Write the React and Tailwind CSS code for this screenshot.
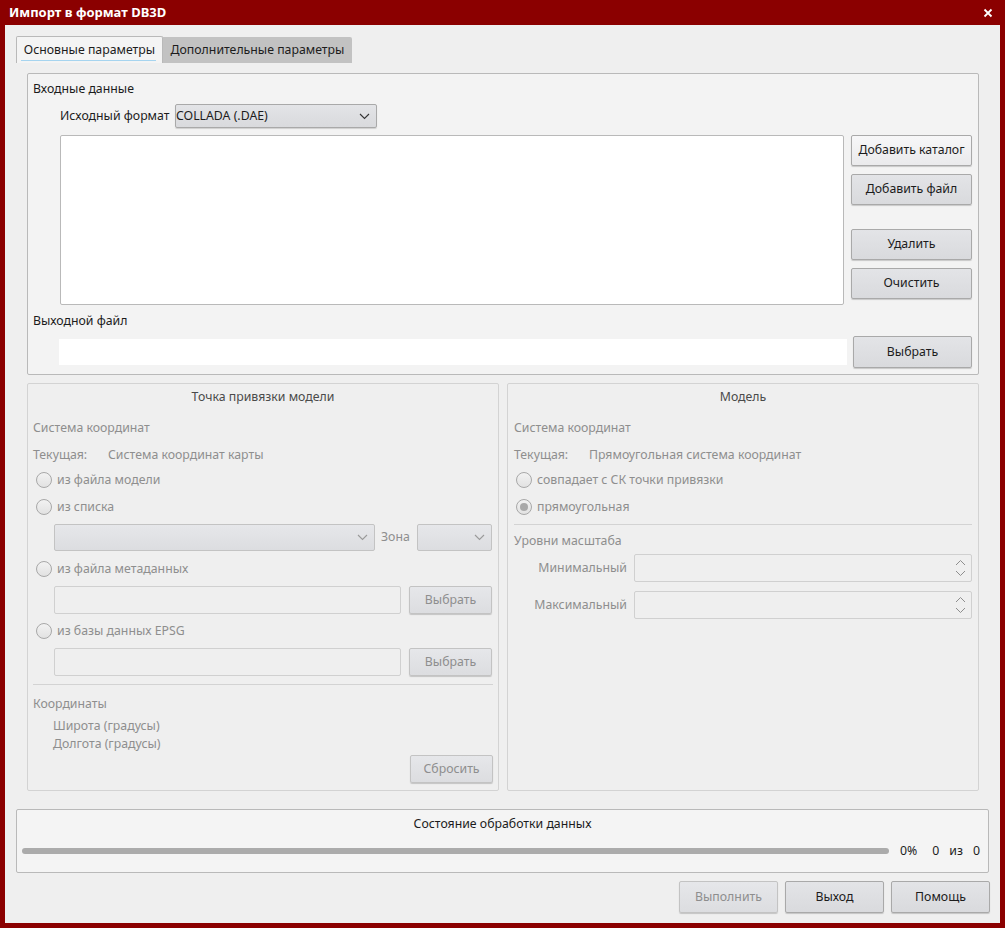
import React from "react";

const F = { fontFamily: '"Noto Sans", "Open Sans", sans-serif' };

function Chevron({ className = "" }) {
  return (
    <svg width="11" height="7" viewBox="0 0 11 7" className={className}>
      <path d="M1 1l4.5 4.5L10 1" fill="none" stroke="currentColor" strokeWidth="1.1" />
    </svg>
  );
}

function Btn({ children, w, h = 30, disabled, light, className = "" }) {
  return (
    <div
      className={`flex items-center justify-center rounded-[2px] border text-[12.3px] shadow-[0_1px_1px_rgba(0,0,0,0.18)] ${
        disabled
          ? "border-[#c3c3c3] bg-gradient-to-b from-[#e6e7ea] to-[#dcdde0] text-[#8e8e8e]"
          : light
          ? "border-[#a9a9a9] bg-gradient-to-b from-[#f7f7f8] to-[#eaeaec] text-[#1c1c1c]"
          : "border-[#a9a9a9] bg-gradient-to-b from-[#e3e4e7] to-[#d9dadd] text-[#1c1c1c]"
      } ${className}`}
      style={{ width: w, height: h }}
    >
      {children}
    </div>
  );
}

function Radio({ checked, label }) {
  return (
    <div className="flex items-center h-[20px] text-[12.3px] text-[#8e8e8e]">
      <div className="ml-[8px] w-[16px] h-[16px] rounded-full border border-[#a8a8a8] bg-gradient-to-b from-[#f2f2f2] to-[#e2e2e2] flex items-center justify-center">
        {checked && <div className="w-[8px] h-[8px] rounded-full bg-[#a9a9a9]" />}
      </div>
      <span className="ml-[5px]">{label}</span>
    </div>
  );
}

function DisInput({ w }) {
  return <div className="h-[28px] rounded-[2px] border border-[#d0d0d0] bg-[#efefef]" style={{ width: w }} />;
}

function Spin() {
  return (
    <div className="relative h-[28px] w-[338px] rounded-[2px] border border-[#d0d0d0] bg-[#efefef]">
      <svg width="11" height="20" viewBox="0 0 11 20" className="absolute right-[5px] top-[3px] text-[#8e8e8e]">
        <path d="M1 7l4.5-4.5L10 7" fill="none" stroke="currentColor" strokeWidth="1" />
        <path d="M1 13l4.5 4.5L10 13" fill="none" stroke="currentColor" strokeWidth="1" />
      </svg>
    </div>
  );
}

export default function App() {
  return (
    <div style={F} className="w-[1005px] h-[928px] bg-[#8b0000] flex flex-col px-[5px] pb-[5px]">
      {/* title bar */}
      <div className="h-[25px] flex items-center justify-between pl-[4px] pr-[7px]">
        <span className="text-white text-[13px] font-bold leading-none">Импорт в формат DB3D</span>
        <svg width="10" height="10" viewBox="0 0 10 10">
          <path d="M1.5 1.5l7 7M8.5 1.5l-7 7" stroke="white" strokeWidth="1.8" />
        </svg>
      </div>

      {/* client */}
      <div className="flex-1 bg-[#efefef] flex flex-col pl-[11px] pr-[11px] pt-[11px] text-[#1c1c1c]">
        {/* tabs */}
        <div className="flex items-end h-[27px]">
          <div className="relative h-[27px] w-[147px] border border-b-0 border-[#b9b9b9] bg-[#f4f4f4] rounded-t-[2px] flex items-center justify-center text-[12.3px]">
            Основные параметры
            <div className="absolute left-[4px] right-[6px] bottom-[2px] h-[1px] bg-[#a6d4ef]" />
          </div>
          <div className="h-[26px] w-[189px] bg-[#c2c2c2] flex items-center justify-center text-[12.3px] rounded-tr-[2px]">
            Дополнительные параметры
          </div>
        </div>

        {/* tab pane */}
        <div className="flex flex-col pl-[11px] pr-[10px] pt-[10px]">
          {/* input group */}
          <div className="h-[302px] border border-[#b9b9b9] rounded-[2px] bg-[#f3f3f3] flex flex-col pl-[5px] pr-[5px]">
            <div className="mt-[6px] h-[18px] leading-[18px] text-[12.3px]">Входные данные</div>
            <div className="mt-[6px] flex items-center h-[24px] ml-[27px]">
              <span className="text-[12.3px] w-[115px]">Исходный формат</span>
              <div className="w-[202px] h-[24px] rounded-[2px] border border-[#a9a9a9] bg-gradient-to-b from-[#e3e4e7] to-[#d9dadd] shadow-[0_1px_1px_rgba(0,0,0,0.15)] flex items-center justify-between pr-[6px] text-[12.3px]">
                <span>COLLADA (.DAE)</span>
                <Chevron className="text-[#333]" />
              </div>
            </div>
            <div className="mt-[7px] flex ml-[27px] h-[170px]">
              <div className="w-[784px] h-[170px] bg-white border border-[#b9b9b9] rounded-[2px]" />
              <div className="ml-[7px] flex flex-col">
                <Btn w={121} h={31} light>Добавить каталог</Btn>
                <Btn w={121} h={31} className="mt-[8px]">Добавить файл</Btn>
                <Btn w={121} h={31} className="mt-[24px]">Удалить</Btn>
                <Btn w={121} h={31} className="mt-[8px]">Очистить</Btn>
              </div>
            </div>
            <div className="mt-[7px] h-[18px] leading-[18px] text-[12.3px]">Выходной файл</div>
            <div className="mt-[6px] flex items-center ml-[26px]">
              <div className="w-[788px] h-[26px] bg-white" />
              <Btn w={119} h={32} className="ml-[6px]">Выбрать</Btn>
            </div>
          </div>

          {/* two groups */}
          <div className="mt-[8px] flex gap-[8px]">
            {/* left */}
            <div className="w-[472px] h-[408px] border border-[#d3d3d3] rounded-[2px] flex flex-col px-[5px] text-[12.3px] text-[#8e8e8e]">
              <div className="mt-[3px] h-[20px] leading-[20px] text-center text-[#4a4a4a]">Точка привязки модели</div>
              <div className="mt-[11px] h-[20px] leading-[20px]">Система координат</div>
              <div className="mt-[7px] h-[20px] leading-[20px] flex">
                <span className="w-[75px]">Текущая:</span>
                <span>Система координат карты</span>
              </div>
              <div className="mt-[5px] -ml-[5px]"><Radio label="из файла модели" /></div>
              <div className="mt-[7px] -ml-[5px]"><Radio label="из списка" /></div>
              <div className="mt-[7px] ml-[21px] flex items-center">
                <div className="w-[321px] h-[27px] rounded-[2px] border border-[#c3c3c3] bg-gradient-to-b from-[#e6e7ea] to-[#dcdde0] flex items-center justify-end pr-[6px]">
                  <Chevron className="text-[#9a9a9a]" />
                </div>
                <span className="ml-[6px] w-[36px]">Зона</span>
                <div className="w-[75px] h-[27px] rounded-[2px] border border-[#c3c3c3] bg-gradient-to-b from-[#e6e7ea] to-[#dcdde0] flex items-center justify-end pr-[6px]">
                  <Chevron className="text-[#9a9a9a]" />
                </div>
              </div>
              <div className="mt-[8px] -ml-[5px]"><Radio label="из файла метаданных" /></div>
              <div className="mt-[7px] ml-[21px] flex items-center">
                <DisInput w={347} />
                <Btn w={83} h={28} disabled className="ml-[8px]">Выбрать</Btn>
              </div>
              <div className="mt-[7px] -ml-[5px]"><Radio label="из базы данных EPSG" /></div>
              <div className="mt-[7px] ml-[21px] flex items-center">
                <DisInput w={347} />
                <Btn w={83} h={28} disabled className="ml-[8px]">Выбрать</Btn>
              </div>
              <div className="mt-[8px] h-[1px] bg-[#d3d3d3]" />
              <div className="mt-[9px] h-[20px] leading-[20px]">Координаты</div>
              <div className="mt-[3px] ml-[20px] h-[18px] leading-[18px]">Широта (градусы)</div>
              <div className="ml-[20px] h-[18px] leading-[18px]">Долгота (градусы)</div>
              <div className="mt-[2px] flex justify-end">
                <Btn w={83} h={28} disabled>Сбросить</Btn>
              </div>
            </div>

            {/* right */}
            <div className="w-[472px] h-[408px] border border-[#d3d3d3] rounded-[2px] flex flex-col px-[6px] text-[12.3px] text-[#8e8e8e]">
              <div className="mt-[3px] h-[20px] leading-[20px] text-center text-[#4a4a4a]">Модель</div>
              <div className="mt-[11px] h-[20px] leading-[20px]">Система координат</div>
              <div className="mt-[7px] h-[20px] leading-[20px] flex">
                <span className="w-[75px]">Текущая:</span>
                <span>Прямоугольная система координат</span>
              </div>
              <div className="mt-[5px] -ml-[6px]"><Radio label="совпадает с СК точки привязки" /></div>
              <div className="mt-[7px] -ml-[6px]"><Radio checked label="прямоугольная" /></div>
              <div className="mt-[7px] h-[1px] bg-[#d3d3d3]" />
              <div className="mt-[6px] h-[20px] leading-[20px]">Уровни масштаба</div>
              <div className="mt-[3px] flex items-center">
                <span className="w-[114px] text-right">Минимальный</span>
                <div className="ml-[7px]"><Spin /></div>
              </div>
              <div className="mt-[9px] flex items-center">
                <span className="w-[114px] text-right">Максимальный</span>
                <div className="ml-[7px]"><Spin /></div>
              </div>
            </div>
          </div>
        </div>

        {/* progress */}
        <div className="mt-[18px] h-[64px] border border-[#b9b9b9] rounded-[2px] bg-[#f4f4f4] flex flex-col">
          <div className="mt-[4px] h-[20px] leading-[20px] text-center text-[12.3px]">Состояние обработки данных</div>
          <div className="mt-[8px] flex items-center pl-[5px] pr-[6px] text-[12.3px]">
            <div className="w-[867px] h-[6px] rounded-full bg-[#ababab]" />
            <span className="ml-[11px]">0%</span>
            <span className="ml-[15px]">0</span>
            <span className="ml-[10px]">из</span>
            <span className="ml-[10px]">0</span>
          </div>
        </div>

        {/* bottom buttons */}
        <div className="mt-[8px] -mr-[1px] flex justify-end gap-[7px]">
          <Btn w={99} h={32} disabled>Выполнить</Btn>
          <Btn w={99} h={32}>Выход</Btn>
          <Btn w={99} h={32}>Помощь</Btn>
        </div>
      </div>
    </div>
  );
}
